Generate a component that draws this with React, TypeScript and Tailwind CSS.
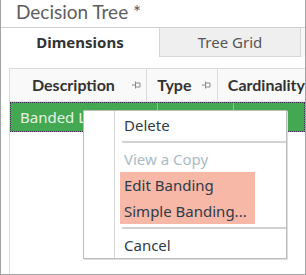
import React from 'react';

const PinIcon = () => (
  <svg width="9" height="8" viewBox="0 0 9 8" className="shrink-0">
    <path d="M0 4h3M3.5 0.5v7M3.5 2h4.5v4h-4.5" stroke="#8a8a8a" strokeWidth="1" fill="none" />
  </svg>
);

const menuItems = [
  { label: 'Delete', kind: 'item' },
  { label: '', kind: 'sep' },
  { label: 'View a Copy', kind: 'disabled' },
];

export default function App() {
  return (
    <div className="relative h-[275px] w-[306px] overflow-hidden bg-white font-['Noto_Sans',sans-serif]">
      <div className="flex h-full w-full flex-col border border-t-0 border-[#a3a3a3]">
        <div className="h-[28px] shrink-0 border-b border-[#cfcfcf] pl-[15px] font-['Lato',sans-serif] text-[19px] leading-[24px] text-[#5e5e5e]">
          Decision Tree *
        </div>

        <div className="flex h-[29px] shrink-0">
          <div className="flex w-[158px] items-center justify-center text-[15px] font-bold text-[#333]">
            Dimensions
          </div>
          <div className="flex w-[142px] items-center justify-center border border-t-0 border-[#d6d6d6] bg-[#efefef] text-[15px] text-[#555]">
            Tree Grid
          </div>
          <div className="flex-1 bg-[#f7f7f7]" />
        </div>

        <div className="flex-1 pl-[8px] pt-[11px]">
          <div className="h-full border-l border-t border-[#dadada]">
            <div className="flex h-[33px] border-b border-[#e2e2e2] bg-[#f9f9f9] font-['Lato',sans-serif] text-[16px] font-bold text-[#333]">
              <div className="flex w-[148px] items-center border-r border-[#dcdcdc] pl-[22px] pr-[5px]">
                <span className="flex-1">Description</span>
                <PinIcon />
              </div>
              <div className="flex w-[76px] items-center border-r border-[#dcdcdc] pl-[10px] pr-[6px]">
                <span className="flex-1">Type</span>
                <PinIcon />
              </div>
              <div className="flex flex-1 items-center whitespace-nowrap pl-[10px]">Cardinality</div>
            </div>
            <div className="flex h-[30px] border border-dotted border-[#4a2a5a] bg-[#44a853] text-[15px] text-[#e4f4e4]">
              <div className="flex w-[147px] items-center border-r border-[#8cc893] pl-[9px]">Banded Level</div>
              <div className="flex w-[76px] items-center border-r border-[#8cc893] pl-[10px]">Banded</div>
              <div className="flex flex-1 items-center pl-[10px]">Hi</div>
            </div>
          </div>
        </div>
      </div>

      <div className="absolute left-[83px] top-[110px] flex h-[149px] w-[204px] border border-[#bdbdbd] bg-white text-[15px] text-[#2f3b47] shadow-[1px_1px_0_#dedede]">
        <div className="w-[31px] shrink-0 border-r border-[#d6d6d6]" />
        <div className="flex flex-1 flex-col pt-[1px]">
          {menuItems.map((m, i) =>
            m.kind === 'sep' ? (
              <div key={i} className="my-[3px] ml-[7px] h-[2px] bg-[#d2d2d2]" />
            ) : (
              <div
                key={i}
                className={`flex h-[26px] items-center pl-[9px] ${m.kind === 'disabled' ? 'text-[#a9bcc4]' : ''}`}
              >
                {m.label}
              </div>
            )
          )}
          <div className="ml-[5px] w-[135px] bg-[#f7b8a8]">
            <div className="flex h-[26px] items-center pl-[4px]">Edit Banding</div>
            <div className="flex h-[26px] items-center pl-[4px]">Simple Banding...</div>
          </div>
          <div className="my-[3px] ml-[7px] h-[2px] bg-[#d2d2d2]" />
          <div className="flex h-[26px] items-center pl-[9px]">Cancel</div>
        </div>
      </div>
    </div>
  );
}
